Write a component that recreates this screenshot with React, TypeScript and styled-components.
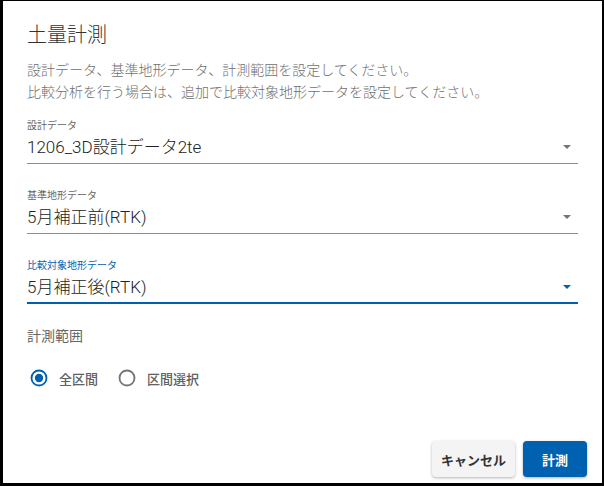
import styled, { createGlobalStyle } from 'styled-components'

const GlobalStyle = createGlobalStyle`
  html, body {
    margin: 0;
    padding: 0;
    background: #000;
  }
  * {
    box-sizing: border-box;
  }
`

const blue = '#0061b1'
const font = `Roboto, "Noto Sans CJK JP", "Noto Sans", sans-serif`

const Backdrop = styled.div`
  width: 604px;
  height: 486px;
  padding: 1px 2px 3px 3px;
  background: #000;
`

const Dialog = styled.div`
  width: 599px;
  height: 482px;
  background: #fff;
  display: flex;
  flex-direction: column;
  font-family: ${font};
`

const Content = styled.div`
  padding: 18px 24px 0 24px;
  display: flex;
  flex-direction: column;
`

const Title = styled.h2`
  margin: 0;
  font-size: 20px;
  line-height: 32px;
  font-weight: 300;
  color: #333;
`

const Description = styled.p`
  margin: 8px 0 0 0;
  font-size: 14px;
  line-height: 22px;
  font-weight: 300;
  color: #707070;
`

const Field = styled.div<{ $focused?: boolean }>`
  margin-top: 25px;
  display: flex;
  flex-direction: column;
  border-bottom: ${({ $focused }) => ($focused ? `2px solid ${blue}` : '1px solid #8c8c8c')};
  padding-bottom: ${({ $focused }) => ($focused ? '2px' : '3px')};

  &:first-of-type {
    margin-top: 16px;
  }
`

const FieldLabel = styled.label<{ $focused?: boolean }>`
  font-size: 10px;
  line-height: 14px;
  color: ${({ $focused }) => ($focused ? blue : '#666')};
`

const SelectRow = styled.div`
  margin-top: 1px;
  height: 26px;
  display: flex;
  align-items: center;
  justify-content: space-between;
`

const SelectValue = styled.span`
  font-size: 17px;
  line-height: 26px;
  font-weight: 300;
  color: #222;
`

const Caret = styled.span<{ $focused?: boolean }>`
  width: 0;
  height: 0;
  margin-right: 7px;
  border-left: 4px solid transparent;
  border-right: 4px solid transparent;
  border-top: 4px solid ${({ $focused }) => ($focused ? blue : '#757575')};
`

const SectionLabel = styled.div`
  margin-top: 22px;
  font-size: 14px;
  line-height: 20px;
  color: #666;
`

const RadioGroup = styled.div`
  margin-top: 12px;
  height: 40px;
  padding-left: 2px;
  display: flex;
  align-items: center;
  gap: 19px;
`

const RadioOption = styled.label`
  display: flex;
  align-items: center;
  gap: 10px;
  font-size: 13px;
  font-weight: 500;
  color: #616161;
  cursor: pointer;
`

const RadioIcon = ({ checked }: { checked: boolean }) => (
  <svg width="20" height="20" viewBox="0 0 24 24">
    <circle cx="12" cy="12" r="9" fill="none" stroke={checked ? blue : '#757575'} strokeWidth="2.2" />
    {checked && <circle cx="12" cy="12" r="5" fill={blue} />}
  </svg>
)

const Actions = styled.div`
  margin-top: auto;
  padding: 0 15px 6px 0;
  display: flex;
  justify-content: flex-end;
  gap: 8px;
`

const Button = styled.button<{ $primary?: boolean }>`
  height: 36px;
  min-width: 64px;
  padding: 0 9px;
  border: none;
  border-radius: 4px;
  font-family: ${font};
  font-size: 13px;
  font-weight: 700;
  background: ${({ $primary }) => ($primary ? blue : '#f4f4f4')};
  color: ${({ $primary }) => ($primary ? '#fff' : '#333')};
  box-shadow: 0 1px 3px rgba(0, 0, 0, 0.3);
  cursor: pointer;
`

type SelectProps = {
  label: string,
  value: string,
  focused?: boolean,
}

const Select = ({ label, value, focused }: SelectProps) => (
  <Field $focused={focused}>
    <FieldLabel $focused={focused}>{label}</FieldLabel>
    <SelectRow>
      <SelectValue>{value}</SelectValue>
      <Caret $focused={focused} />
    </SelectRow>
  </Field>
)

export default function App() {
  return (
    <Backdrop>
      <GlobalStyle />
      <Dialog>
        <Content>
          <Title>土量計測</Title>
          <Description>
            設計データ、基準地形データ、計測範囲を設定してください。
            <br />
            比較分析を行う場合は、追加で比較対象地形データを設定してください。
          </Description>
          <Select label="設計データ" value="1206_3D設計データ2te" />
          <Select label="基準地形データ" value="5月補正前(RTK)" />
          <Select label="比較対象地形データ" value="5月補正後(RTK)" focused />
          <SectionLabel>計測範囲</SectionLabel>
          <RadioGroup>
            <RadioOption>
              <RadioIcon checked />
              全区間
            </RadioOption>
            <RadioOption>
              <RadioIcon checked={false} />
              区間選択
            </RadioOption>
          </RadioGroup>
        </Content>
        <Actions>
          <Button>キャンセル</Button>
          <Button $primary>計測</Button>
        </Actions>
      </Dialog>
    </Backdrop>
  )
}
